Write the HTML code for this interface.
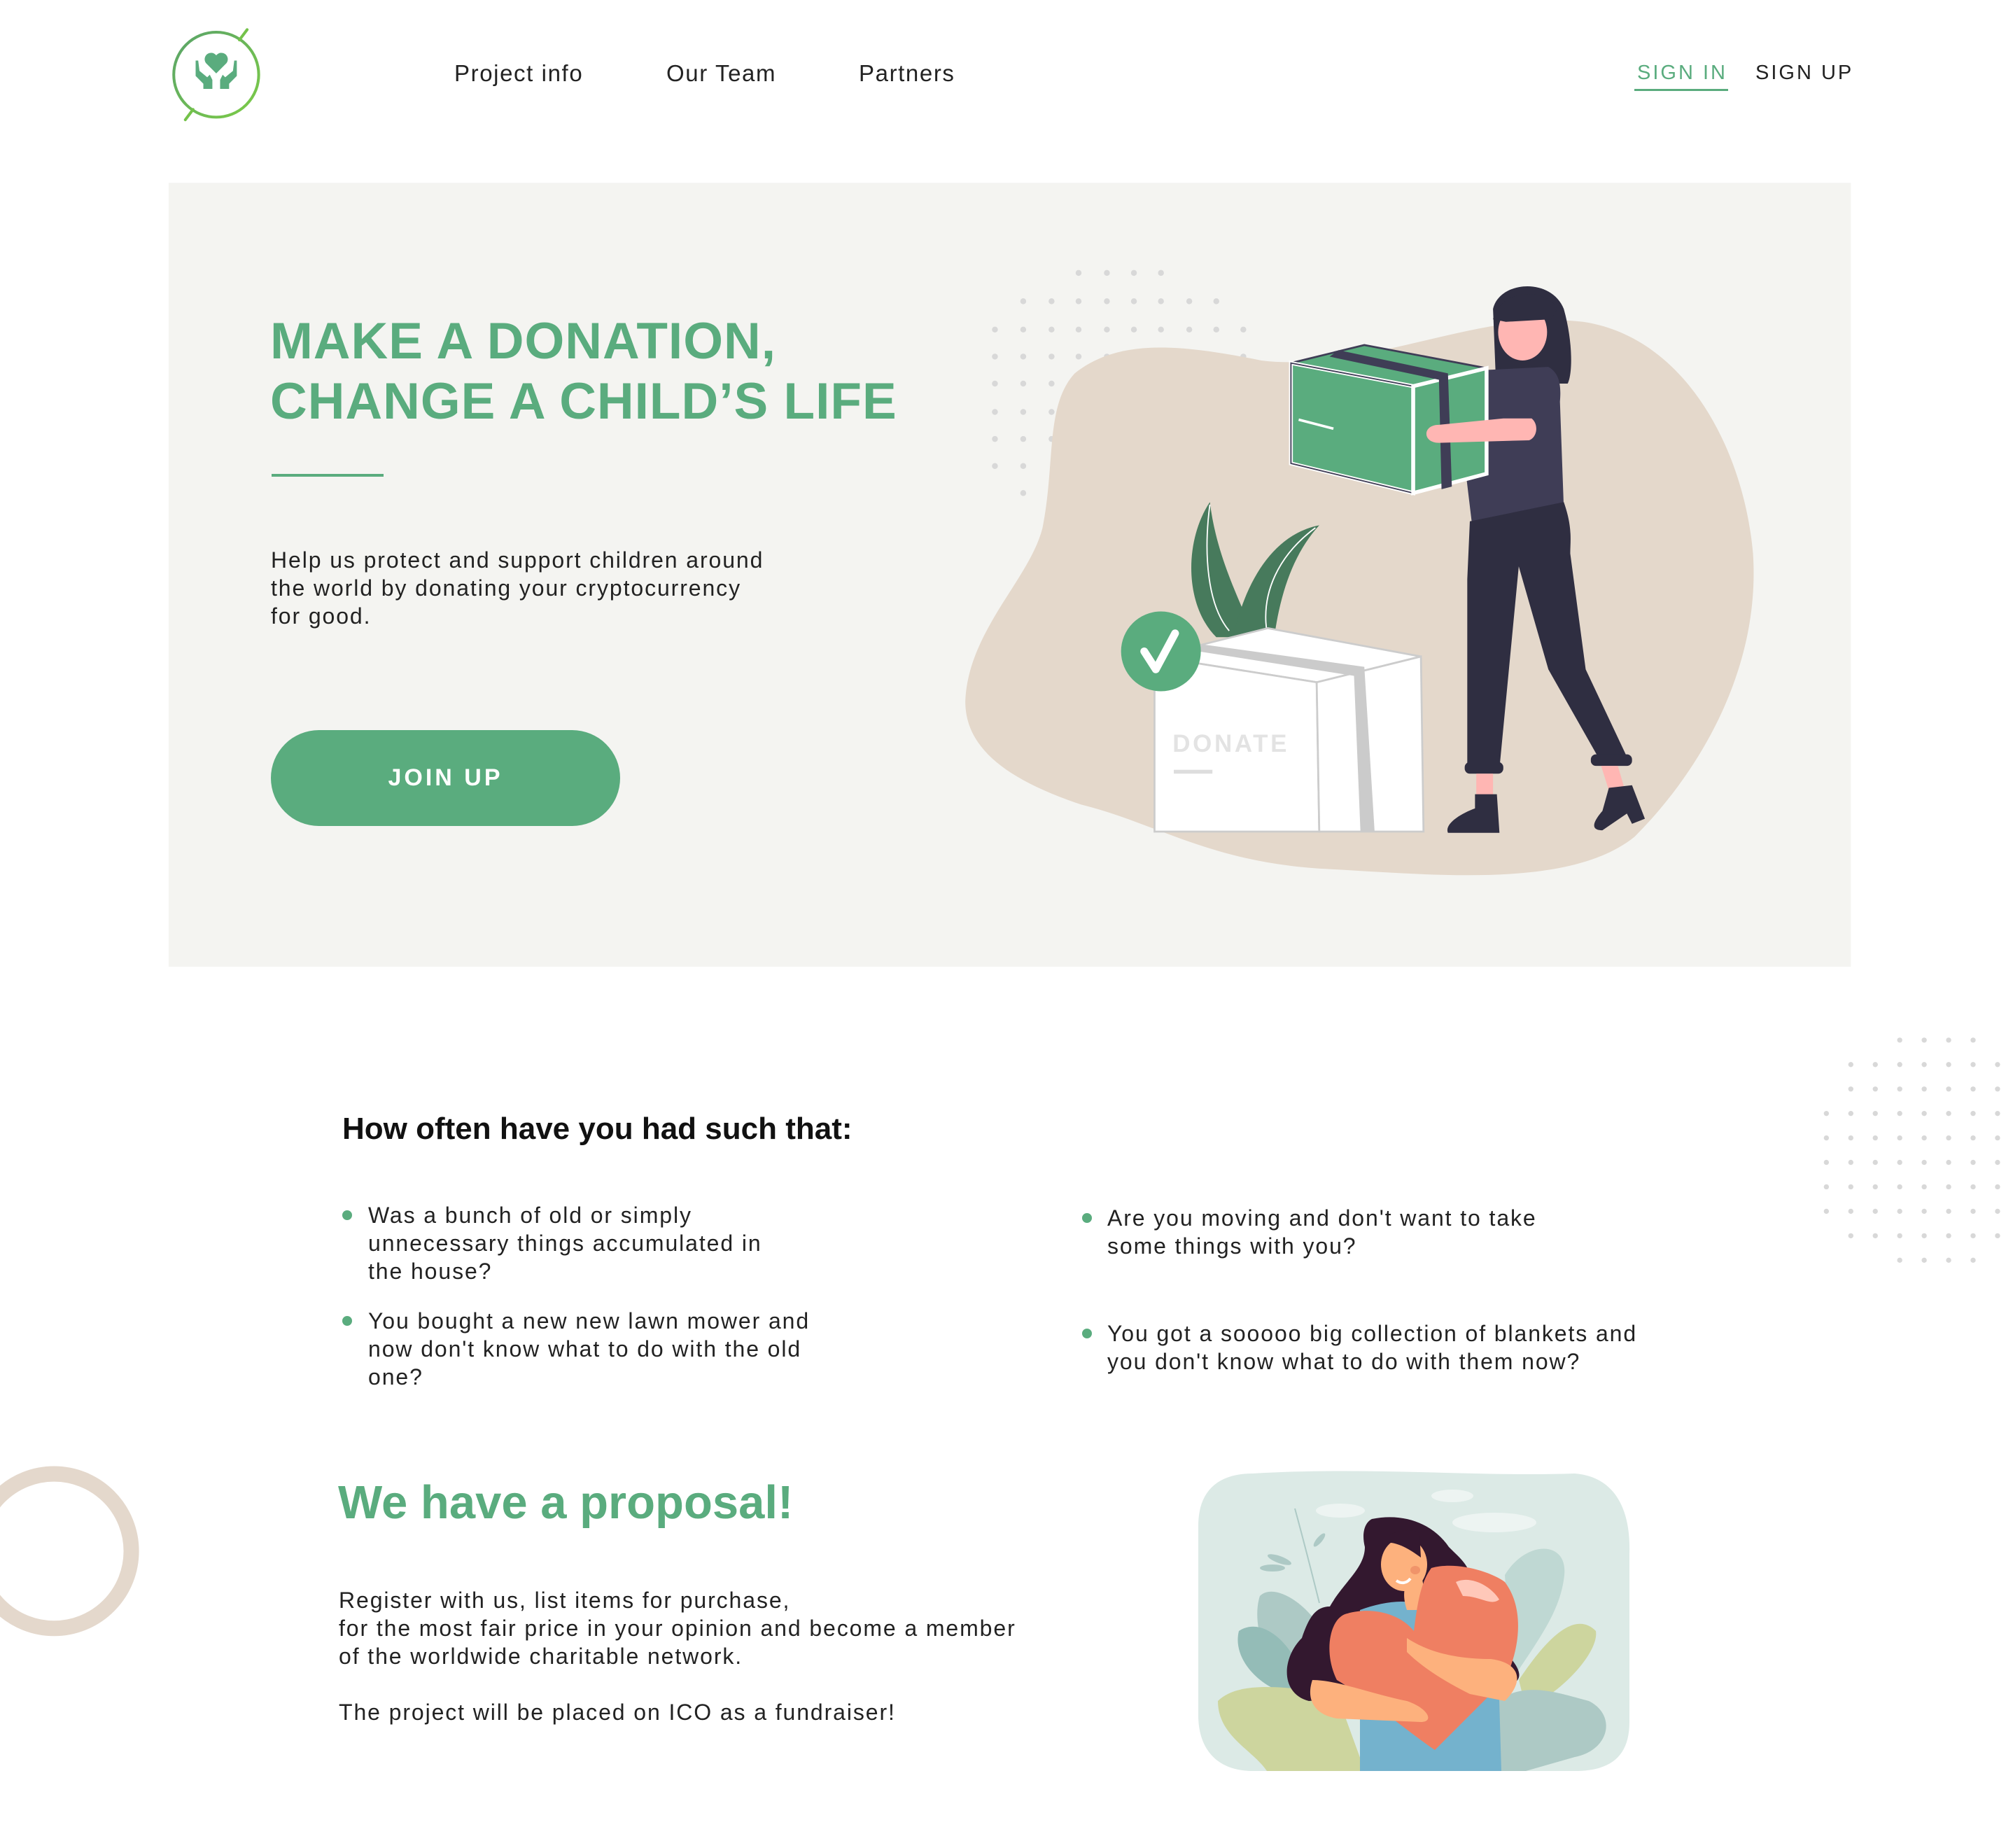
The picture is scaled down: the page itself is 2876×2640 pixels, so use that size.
<!DOCTYPE html>
<html><head><meta charset="utf-8">
<style>
*{margin:0;padding:0;box-sizing:border-box}
html,body{width:2876px;height:2640px;background:#fff;overflow:hidden;font-family:"Liberation Sans",sans-serif;color:#222}
.a{position:absolute;white-space:nowrap}
.nav{font-size:33px;color:#222;top:86px;letter-spacing:1.6px}
.p{font-size:32px;line-height:40px;color:#222;letter-spacing:1.9px}
.g{color:#5aac7e}
.bul{position:absolute;width:14px;height:14px;border-radius:50%;background:#5aac7e}
</style></head><body>
<svg class="a" style="left:0;top:0" width="2876" height="2640" viewBox="0 0 1564 1435.6">
<defs><linearGradient id="lg" x1="0" y1="0" x2="1" y2="1"><stop offset="0" stop-color="#5aa36a"/><stop offset="1" stop-color="#7ccc46"/></linearGradient></defs>
<circle cx="168" cy="58" r="33" fill="none" stroke="url(#lg)" stroke-width="2.2"/>
<line x1="186" y1="31" x2="192" y2="23" stroke="#74c24a" stroke-width="2.2" stroke-linecap="round"/>
<line x1="150" y1="85" x2="144" y2="93" stroke="#74c24a" stroke-width="2.2" stroke-linecap="round"/>
<path d="M168 57 L160 49 A4.5 4.5 0 0 1 168 43 A4.5 4.5 0 0 1 176 49 Z" fill="#5aac7e"/>
<path d="M152 47 L154 47 L155 55 L161 60 L163 58 L165 62 L165 69 L158 69 L158 65 L152 59 Z" fill="#5aac7e"/>
<path d="M184 47 L182 47 L181 55 L175 60 L173 58 L171 62 L171 69 L178 69 L178 65 L184 59 Z" fill="#5aac7e"/>
<rect x="131" y="142" width="1307" height="609" fill="#f4f4f1"/>
<g fill="#d8d8d8">
<circle cx="838" cy="212" r="2.3"/><circle cx="860" cy="212" r="2.3"/><circle cx="881" cy="212" r="2.3"/><circle cx="902" cy="212" r="2.3"/>
<circle cx="795" cy="234" r="2.3"/><circle cx="817" cy="234" r="2.3"/><circle cx="838" cy="234" r="2.3"/><circle cx="860" cy="234" r="2.3"/><circle cx="881" cy="234" r="2.3"/><circle cx="902" cy="234" r="2.3"/><circle cx="924" cy="234" r="2.3"/><circle cx="945" cy="234" r="2.3"/>
<circle cx="773" cy="256" r="2.3"/><circle cx="795" cy="256" r="2.3"/><circle cx="817" cy="256" r="2.3"/><circle cx="838" cy="256" r="2.3"/><circle cx="860" cy="256" r="2.3"/><circle cx="881" cy="256" r="2.3"/><circle cx="902" cy="256" r="2.3"/><circle cx="924" cy="256" r="2.3"/><circle cx="945" cy="256" r="2.3"/><circle cx="966" cy="256" r="2.3"/>
<circle cx="773" cy="277" r="2.3"/><circle cx="795" cy="277" r="2.3"/><circle cx="817" cy="277" r="2.3"/><circle cx="838" cy="277" r="2.3"/><circle cx="860" cy="277" r="2.3"/><circle cx="966" cy="277" r="2.3"/>
<circle cx="773" cy="298" r="2.3"/><circle cx="795" cy="298" r="2.3"/><circle cx="817" cy="298" r="2.3"/>
<circle cx="773" cy="320" r="2.3"/><circle cx="795" cy="320" r="2.3"/><circle cx="817" cy="320" r="2.3"/>
<circle cx="773" cy="341" r="2.3"/><circle cx="795" cy="341" r="2.3"/><circle cx="817" cy="341" r="2.3"/>
<circle cx="773" cy="362" r="2.3"/><circle cx="795" cy="362" r="2.3"/>
<circle cx="795" cy="383" r="2.3"/>
</g>
<path d="M835 290 C870 262 920 268 980 280 C1060 290 1150 240 1230 250 C1310 262 1355 350 1362 430 C1368 520 1320 600 1270 650 C1220 690 1120 680 1030 675 C940 670 900 640 840 625 C780 605 750 580 750 545 C752 490 800 450 810 410 C820 360 812 315 835 290 Z" fill="#e4d8cb"/>
<path d="M940 390 C920 420 920 470 945 495 L975 495 C960 460 945 430 940 390 Z" fill="#477a5c"/>
<path d="M1025 408 C990 415 968 450 958 495 L990 495 C995 460 1005 430 1025 408 Z" fill="#477a5c"/>
<path d="M940 392 C935 430 938 470 955 490 M1022 410 C995 430 978 460 985 495" stroke="#fff" stroke-width="1" fill="none"/>
<path d="M897 510 L985 488 L1104 510 L1023 530 Z" fill="#fff" stroke="#ccc" stroke-width="1.5"/>
<path d="M897 510 L1023 530 L1025 646 L897 646 Z" fill="#fff" stroke="#ccc" stroke-width="1.5"/>
<path d="M1023 530 L1104 510 L1106 646 L1025 646 Z" fill="#fff" stroke="#ccc" stroke-width="1.5"/>
<path d="M930 500 L1060 518 L1068 646 L1057 646 L1052 525 L925 505 Z" fill="#cbcbcb"/>
<text x="911" y="584" font-family="Liberation Sans,sans-serif" font-weight="bold" font-size="19" letter-spacing="2" fill="#e3e3e3">DONATE</text>
<rect x="912" y="598" width="30" height="3" fill="#ddd"/>
<circle cx="902" cy="506" r="31" fill="#5aac7e"/>
<path d="M889 506 L898 520 L913 492" stroke="#fff" stroke-width="6" fill="none" stroke-linecap="round" stroke-linejoin="round"/>
<path d="M1160 240 C1165 218 1205 215 1215 240 C1222 265 1222 290 1218 298 L1195 298 L1162 290 Z" fill="#2f2e41"/>
<ellipse cx="1183" cy="258" rx="19" ry="22" fill="#ffb6b3"/>
<path d="M1160 248 C1165 225 1200 222 1210 240 L1205 248 L1170 250 Z" fill="#2f2e41"/>
<path d="M1142 288 L1203 285 C1212 290 1213 300 1212 312 L1215 395 L1144 410 L1138 360 Z" fill="#3f3d56"/>
<path d="M1142 405 L1215 390 C1222 410 1220 420 1220 430 L1232 520 L1265 590 L1245 594 L1203 520 L1180 440 L1165 597 L1140 598 L1140 450 Z" fill="#2f2e41"/>
<rect x="1138" y="592" width="30" height="9" rx="4" fill="#2f2e41"/><rect x="1236" y="586" width="32" height="9" rx="4" fill="#2f2e41"/>
<path d="M1147 601 L1160 601 L1160 618 L1147 618 Z" fill="#ffb6b3"/><path d="M1244 595 L1257 595 L1262 612 L1250 614 Z" fill="#ffb6b3"/>
<path d="M1146 617 L1163 617 L1165 647 L1125 647 C1122 640 1135 632 1146 628 Z" fill="#2f2e41"/>
<path d="M1250 612 L1268 610 L1278 636 L1268 640 L1264 632 L1245 645 C1235 645 1238 638 1245 630 Z" fill="#2f2e41"/>
<path d="M1003 282 L1060 268 L1155 286 L1098 300 Z" fill="#5aac7e" stroke="#3f3d56" stroke-width="1.5"/>
<path d="M1003 282 L1098 300 L1098 383 L1003 360 Z" fill="#5aac7e" stroke="#fff" stroke-width="3"/>
<path d="M1003 282 L1098 300 L1098 383 L1003 360 Z" fill="none" stroke="#3f3d56" stroke-width="1"/>
<path d="M1098 300 L1155 286 L1155 368 L1098 383 Z" fill="#5aac7e" stroke="#fff" stroke-width="3"/>
<path d="M1040 272 L1125 290 L1128 378 L1120 380 L1118 295 L1033 277 Z" fill="#3f3d56"/>
<line x1="1009" y1="326" x2="1036" y2="333" stroke="#fff" stroke-width="2"/>
<path d="M1118 330 L1168 325 L1190 325 C1196 330 1194 340 1188 342 L1118 344 C1105 344 1105 330 1118 330 Z" fill="#ffb6b3"/>
<g fill="#d8d8d8">
<circle cx="1476" cy="808" r="2"/><circle cx="1495" cy="808" r="2"/><circle cx="1514" cy="808" r="2"/><circle cx="1533" cy="808" r="2"/>
<circle cx="1438" cy="827" r="2"/><circle cx="1457" cy="827" r="2"/><circle cx="1476" cy="827" r="2"/><circle cx="1495" cy="827" r="2"/><circle cx="1514" cy="827" r="2"/><circle cx="1533" cy="827" r="2"/><circle cx="1552" cy="827" r="2"/>
<circle cx="1438" cy="846" r="2"/><circle cx="1457" cy="846" r="2"/><circle cx="1476" cy="846" r="2"/><circle cx="1495" cy="846" r="2"/><circle cx="1514" cy="846" r="2"/><circle cx="1533" cy="846" r="2"/><circle cx="1552" cy="846" r="2"/>
<circle cx="1419" cy="865" r="2"/><circle cx="1438" cy="865" r="2"/><circle cx="1457" cy="865" r="2"/><circle cx="1476" cy="865" r="2"/><circle cx="1495" cy="865" r="2"/><circle cx="1514" cy="865" r="2"/><circle cx="1533" cy="865" r="2"/><circle cx="1552" cy="865" r="2"/>
<circle cx="1419" cy="884" r="2"/><circle cx="1438" cy="884" r="2"/><circle cx="1457" cy="884" r="2"/><circle cx="1476" cy="884" r="2"/><circle cx="1495" cy="884" r="2"/><circle cx="1514" cy="884" r="2"/><circle cx="1533" cy="884" r="2"/><circle cx="1552" cy="884" r="2"/>
<circle cx="1419" cy="903" r="2"/><circle cx="1438" cy="903" r="2"/><circle cx="1457" cy="903" r="2"/><circle cx="1476" cy="903" r="2"/><circle cx="1495" cy="903" r="2"/><circle cx="1514" cy="903" r="2"/><circle cx="1533" cy="903" r="2"/><circle cx="1552" cy="903" r="2"/>
<circle cx="1419" cy="922" r="2"/><circle cx="1438" cy="922" r="2"/><circle cx="1457" cy="922" r="2"/><circle cx="1476" cy="922" r="2"/><circle cx="1495" cy="922" r="2"/><circle cx="1514" cy="922" r="2"/><circle cx="1533" cy="922" r="2"/><circle cx="1552" cy="922" r="2"/>
<circle cx="1419" cy="941" r="2"/><circle cx="1438" cy="941" r="2"/><circle cx="1457" cy="941" r="2"/><circle cx="1476" cy="941" r="2"/><circle cx="1495" cy="941" r="2"/><circle cx="1514" cy="941" r="2"/><circle cx="1533" cy="941" r="2"/><circle cx="1552" cy="941" r="2"/>
<circle cx="1438" cy="960" r="2"/><circle cx="1457" cy="960" r="2"/><circle cx="1476" cy="960" r="2"/><circle cx="1495" cy="960" r="2"/><circle cx="1514" cy="960" r="2"/><circle cx="1533" cy="960" r="2"/><circle cx="1552" cy="960" r="2"/>
<circle cx="1476" cy="979" r="2"/><circle cx="1495" cy="979" r="2"/><circle cx="1514" cy="979" r="2"/><circle cx="1533" cy="979" r="2"/>
</g>
<circle cx="42" cy="1205" r="60" fill="none" stroke="#e4d8cc" stroke-width="12"/>
</svg>

<svg class="a" style="left:1710px;top:2100px" width="620" height="440" viewBox="0 0 620 440">
<path d="M80 5 C250 -5 400 10 540 5 C600 10 620 60 618 120 L618 360 C618 410 590 430 540 430 L80 430 C30 430 2 400 2 350 L2 80 C2 30 30 5 80 5 Z" fill="#dceae6"/>
<ellipse cx="205" cy="58" rx="35" ry="10" fill="#edf4f2"/><ellipse cx="365" cy="37" rx="30" ry="9" fill="#edf4f2"/><ellipse cx="425" cy="75" rx="60" ry="14" fill="#edf4f2"/>
<path d="M140 55 C155 110 165 150 175 190" stroke="#adc9c5" stroke-width="2" fill="none"/>
<ellipse cx="118" cy="128" rx="18" ry="5" fill="#adc9c5" transform="rotate(20 118 128)"/><ellipse cx="108" cy="140" rx="18" ry="5" fill="#adc9c5"/><ellipse cx="175" cy="100" rx="12" ry="4" fill="#adc9c5" transform="rotate(-50 175 100)"/>
<path d="M90 180 C110 160 160 190 185 240 L180 300 L120 300 C90 260 80 210 90 180 Z" fill="#adc9c5"/>
<path d="M60 230 C90 210 130 240 150 290 L130 320 C90 310 50 270 60 230 Z" fill="#94bcb7"/>
<path d="M440 150 C470 100 530 100 525 150 C520 200 490 240 450 300 Z" fill="#bfd8d3"/>
<path d="M460 300 C500 240 540 200 570 230 C575 260 520 320 470 340 Z" fill="#cdd59e"/>
<path d="M30 330 C60 300 130 310 200 320 L240 430 L100 430 C80 400 30 380 30 330 Z" fill="#cdd59e"/>
<path d="M430 330 C470 300 520 320 560 330 C600 350 590 400 540 410 L470 430 L430 430 Z" fill="#adc9c5"/>
<path d="M250 70 C300 60 340 80 360 110 C380 130 395 140 390 170 L440 260 C470 290 470 310 420 310 L160 330 C120 320 120 270 150 240 C160 210 170 195 190 195 C210 160 240 140 240 110 C235 90 240 75 250 70 Z" fill="#33182f"/>
<path d="M233 200 C260 190 290 185 310 190 L430 260 L435 430 L233 430 Z" fill="#74b2cd"/>
<ellipse cx="296" cy="135" rx="33" ry="38" fill="#fdb17d"/>
<path d="M300 200 C290 170 300 150 320 145 L330 200 Z" fill="#fdb17d"/>
<path d="M265 105 C280 100 300 110 320 125 L318 90 C300 80 270 90 265 105 Z" fill="#33182f"/>
<path d="M285 158 C292 163 300 162 305 155" stroke="#fff" stroke-width="4" fill="none"/>
<ellipse cx="312" cy="143" rx="7" ry="6" fill="#f0946a"/>
<path d="M335 140 C370 130 420 145 440 160 C470 200 460 260 440 300 L340 400 C310 380 250 330 200 300 C180 260 190 210 215 205 C250 195 290 205 310 230 C315 190 320 160 335 140 Z" fill="#ef7f62"/>
<path d="M370 160 C390 150 420 165 432 185 C420 195 405 180 380 180 Z" fill="#ffc8b9"/>
<path d="M300 240 C330 260 370 270 420 270 C460 275 470 300 440 330 L390 320 C350 300 320 280 300 260 Z" fill="#fdb17d"/>
<path d="M165 300 C200 300 250 320 300 330 C330 340 340 360 320 360 L200 355 C170 350 155 330 165 300 Z" fill="#fdb17d"/>
</svg>

<div class="a nav" style="left:649px">Project info</div>
<div class="a nav" style="left:952px">Our Team</div>
<div class="a nav" style="left:1227px">Partners</div>
<div class="a g" style="left:2339px;top:88px;font-size:29px;letter-spacing:3px">SIGN IN</div>
<div class="a" style="left:2335px;top:127px;width:134px;height:3px;background:#5aac7e"></div>
<div class="a" style="left:2508px;top:88px;font-size:29px;letter-spacing:3px;color:#222">SIGN UP</div>

<div class="a g" style="left:386px;top:445px;font-size:73px;line-height:86px;font-weight:bold;letter-spacing:1px">MAKE A DONATION,<br>CHANGE A CHILD’S LIFE</div>
<div class="a" style="left:388px;top:677px;width:160px;height:4px;background:#5aac7e"></div>
<div class="a p" style="left:387px;top:780px">Help us protect and support children around<br>the world by donating your cryptocurrency<br>for good.</div>
<div class="a" style="left:387px;top:1043px;width:499px;height:137px;border-radius:69px;background:#5aac7e;color:#fff;font-weight:bold;font-size:34px;letter-spacing:4px;text-align:center;line-height:137px">JOIN UP</div>

<div class="a" style="left:489px;top:1588px;font-size:44px;font-weight:bold;color:#111">How often have you had such that:</div>
<div class="bul" style="left:489px;top:1729px"></div>
<div class="a p" style="left:526px;top:1716px">Was a bunch of old or simply<br>unnecessary things accumulated in<br>the house?</div>
<div class="bul" style="left:489px;top:1880px"></div>
<div class="a p" style="left:526px;top:1867px">You bought a new new lawn mower and<br>now don't know what to do with the old<br>one?</div>
<div class="bul" style="left:1546px;top:1733px"></div>
<div class="a p" style="left:1582px;top:1720px">Are you moving and don't want to take<br>some things with you?</div>
<div class="bul" style="left:1546px;top:1898px"></div>
<div class="a p" style="left:1582px;top:1885px">You got a sooooo big collection of blankets and<br>you don't know what to do with them now?</div>

<div class="a g" style="left:483px;top:2108px;font-size:67px;font-weight:bold">We have a proposal!</div>
<div class="a p" style="left:484px;top:2266px">Register with us, list items for purchase,<br>for the most fair price in your opinion and become a member<br>of the worldwide charitable network.</div>
<div class="a p" style="left:484px;top:2426px">The project will be placed on ICO as a fundraiser!</div>
</body></html>
